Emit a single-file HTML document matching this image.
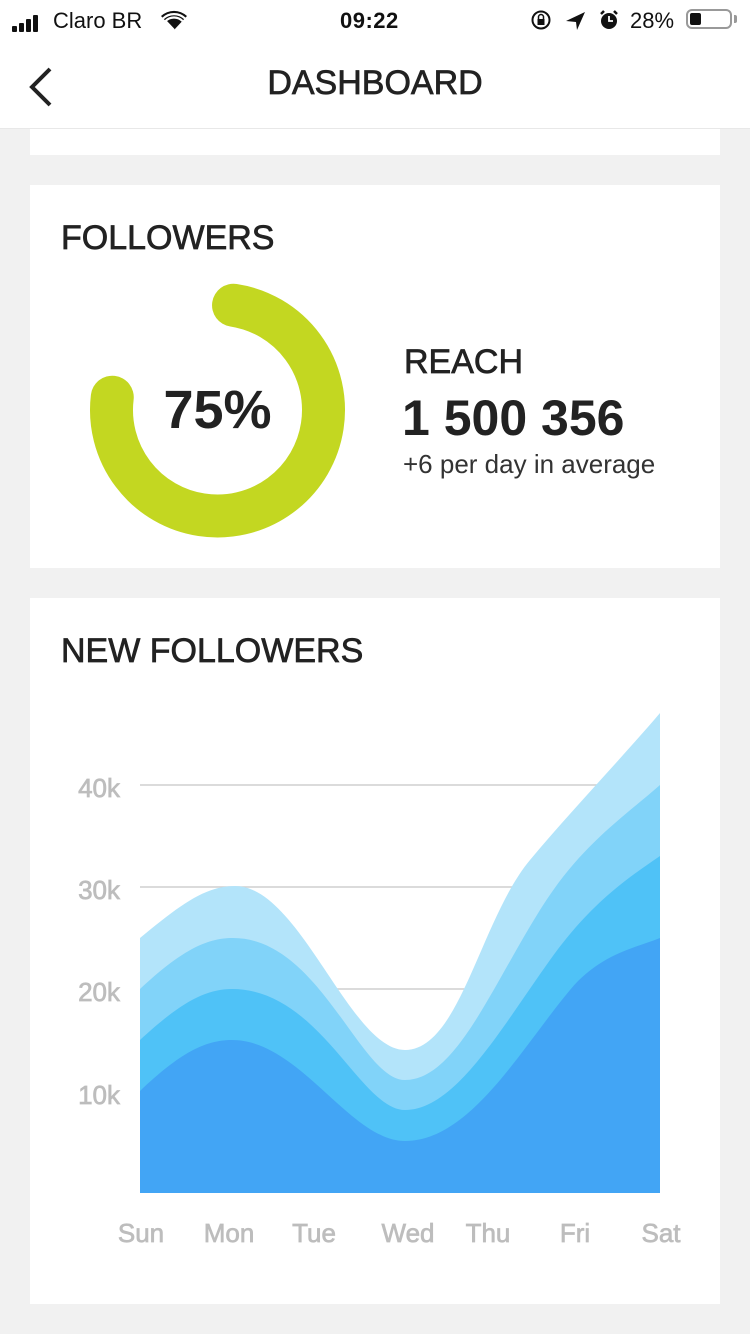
<!DOCTYPE html>
<html><head><meta charset="utf-8"><style>
body{margin:0;width:750px;height:1334px;background:#f1f1f1;font-family:"Liberation Sans",Roboto,sans-serif;position:relative;overflow:hidden;color:#222}
.abs{position:absolute}
.card{position:absolute;left:30px;width:690px;background:#fff}
.med{-webkit-text-stroke:0.7px currentColor}
</style></head><body>
<div class="abs" style="left:0;top:0;width:750px;height:128px;background:#fff;border-bottom:1px solid #e8e8e8"></div>
<!-- status bar -->
<div class="abs" style="left:12px;top:14px;">
 <span class="abs" style="left:0;top:12px;width:5px;height:6px;background:#111;border-radius:1px"></span>
 <span class="abs" style="left:7px;top:9px;width:5px;height:9px;background:#111;border-radius:1px"></span>
 <span class="abs" style="left:14px;top:5px;width:5px;height:13px;background:#111;border-radius:1px"></span>
 <span class="abs" style="left:21px;top:1px;width:5px;height:17px;background:#111;border-radius:1px"></span>
</div>
<div class="abs" style="left:53px;top:8px;font-size:22px;color:#111">Claro BR</div>
<svg class="abs" style="left:160px;top:9px" width="28" height="22" viewBox="0 0 28 22"><path d="M14 21 L1 7 A19 19 0 0 1 27 7 Z" fill="#111"/><path d="M14 21 L5.5 12 A12 12 0 0 1 22.5 12" fill="none" stroke="#fff" stroke-width="2.2"/><path d="M3 9.5 A16 16 0 0 1 25 9.5" fill="none" stroke="#fff" stroke-width="2.2"/></svg>
<div class="abs" style="left:340px;top:8px;font-size:22px;color:#111;font-weight:bold;letter-spacing:0.5px">09:22</div>
<svg class="abs" style="left:530px;top:9px" width="110" height="24" viewBox="0 0 110 24"><circle cx="11" cy="11" r="8.5" fill="none" stroke="#111" stroke-width="2"/><rect x="7.5" y="10" width="7" height="6" fill="#111"/><path d="M8.5 10 V8 A2.5 2.5 0 0 1 13.5 8 V10" fill="none" stroke="#111" stroke-width="1.5"/><path d="M36 12 L55 3 L47 21 L46 13 Z" fill="#111"/><circle cx="79" cy="12" r="8" fill="#111"/><path d="M79 7 V12 H83" stroke="#fff" stroke-width="1.8" fill="none"/><path d="M71 5 L74 2 M87 5 L84 2" stroke="#111" stroke-width="2.5"/></svg>
<div class="abs" style="left:630px;top:8px;font-size:22px;color:#111">28%</div>
<div class="abs" style="left:686px;top:9px;width:46px;height:20px;border:2px solid #999;border-radius:6px;box-sizing:border-box"></div>
<div class="abs" style="left:690px;top:13px;width:11px;height:12px;background:#111;border-radius:2px"></div>
<div class="abs" style="left:734px;top:15px;width:3px;height:8px;background:#999;border-radius:0 2px 2px 0"></div>
<!-- nav -->
<svg class="abs" style="left:26px;top:66px" width="30" height="42" viewBox="0 0 30 42"><path d="M24 3 L6 21 L24 39" fill="none" stroke="#222" stroke-width="4"/></svg>
<div class="abs med" style="left:0;width:750px;top:64px;text-align:center;font-size:34px;color:#222">DASHBOARD</div>
<!-- card stub -->
<div class="card" style="top:129px;height:26px"></div>
<!-- followers -->
<div class="card" style="top:185px;height:383px">
 <div class="abs med" style="left:31px;top:34px;font-size:34px;color:#222">FOLLOWERS</div>
 <svg class="abs" style="left:0;top:0" width="690" height="383"><circle cx="187.5" cy="225" r="106" fill="none" stroke="#c3d721" stroke-width="43" stroke-linecap="round" stroke-dasharray="496 1000" transform="rotate(-81.3 187.5 225)"/></svg>
 <div class="abs" style="left:110px;top:194px;width:155px;text-align:center;font-size:54px;font-weight:bold;color:#222">75%</div>
 <div class="abs med" style="left:374px;top:158px;font-size:34px;color:#222">REACH</div>
 <div class="abs" style="left:372px;top:204px;font-size:50px;font-weight:bold;color:#222">1 500 356</div>
 <div class="abs" style="left:373px;top:264px;font-size:26px;color:#333">+6 per day in average</div>
</div>
<!-- new followers -->
<div class="card" style="top:598px;height:706px">
 <div class="abs med" style="left:31px;top:34px;font-size:34px;color:#222">NEW FOLLOWERS</div>
</div>
<svg class="abs" style="left:0;top:0" width="750" height="1334">
 <g stroke="#cfcfcf" stroke-width="1.5"><line x1="140" y1="785" x2="660" y2="785"/><line x1="140" y1="887" x2="660" y2="887"/><line x1="140" y1="989" x2="660" y2="989"/></g>
 <path d="M140 938 C180 905 205 886 235 886 C300 886 350 1050 405 1050 C460 1050 480 920 530 860 C570 812 620 760 660 713 L660 1193 L140 1193Z" fill="#b3e4fa"/>
 <path d="M140 989 C180 952 205 938 233 938 C320 938 360 1080 405 1080 C455 1080 490 990 540 910 C580 846 620 820 660 785 L660 1193 L140 1193Z" fill="#81d3f9"/>
 <path d="M140 1040 C180 1003 205 989 232 989 C320 989 360 1110 405 1110 C455 1110 500 1030 550 960 C590 904 625 880 660 856 L660 1193 L140 1193Z" fill="#4fc2f7"/>
 <path d="M140 1091 C180 1053 205 1040 232 1040 C300 1040 350 1141 405 1141 C470 1141 520 1050 570 990 C600 954 635 948 660 938 L660 1193 L140 1193Z" fill="#42a5f5"/>
 <g fill="#bdbdbd" stroke="#bdbdbd" stroke-width="0.7" font-family="Liberation Sans,sans-serif" font-size="26">
  <text x="120" y="797" text-anchor="end">40k</text><text x="120" y="899" text-anchor="end">30k</text><text x="120" y="1001" text-anchor="end">20k</text><text x="120" y="1104" text-anchor="end">10k</text>
  <g text-anchor="middle"><text x="141" y="1242">Sun</text><text x="229" y="1242">Mon</text><text x="314" y="1242">Tue</text><text x="408" y="1242">Wed</text><text x="488" y="1242">Thu</text><text x="575" y="1242">Fri</text><text x="661" y="1242">Sat</text></g>
 </g>
</svg>
</body></html>
